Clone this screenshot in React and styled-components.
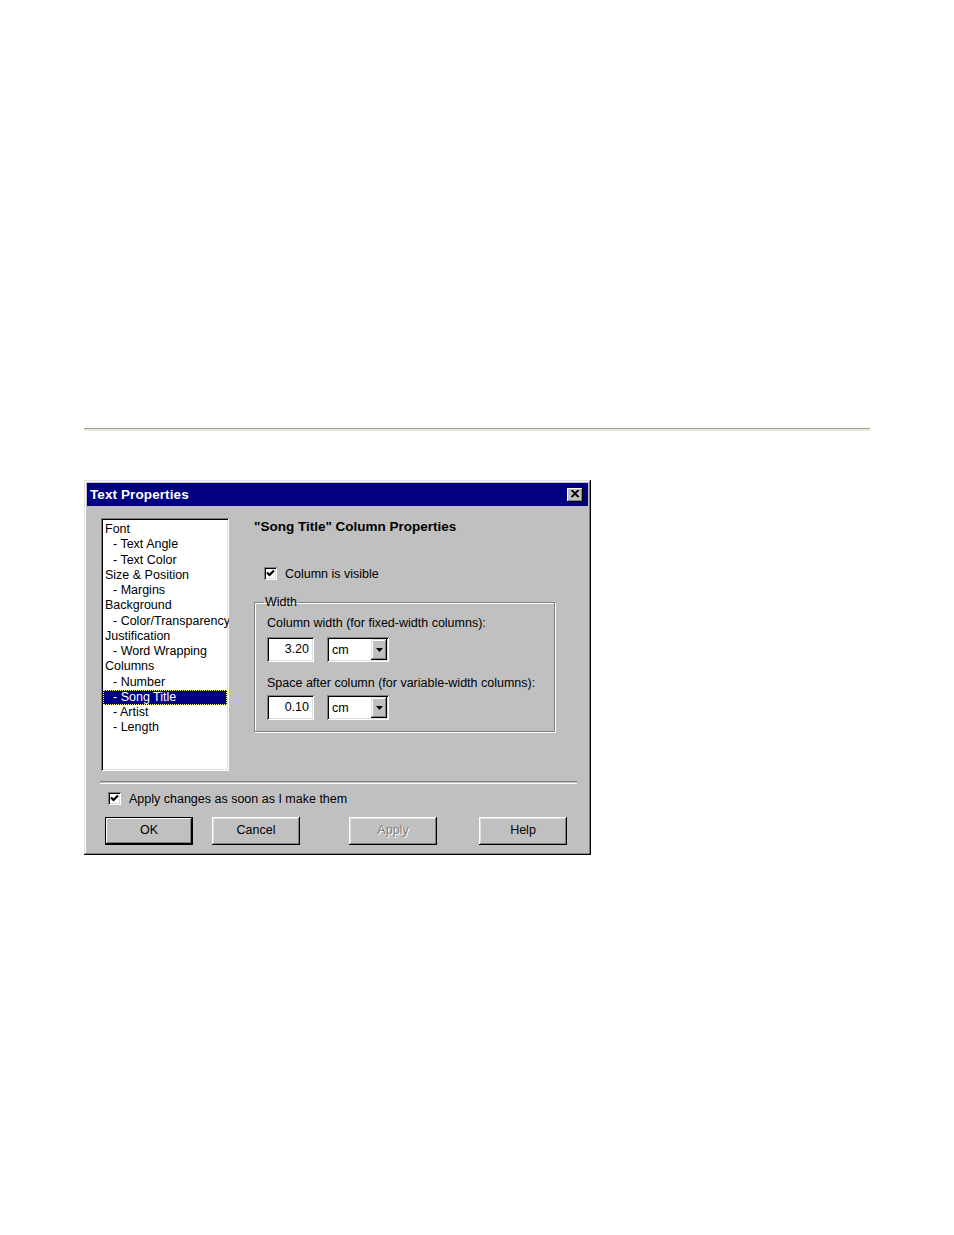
import React from "react";
import styled, { createGlobalStyle } from "styled-components";

const GlobalStyle = createGlobalStyle`
  html, body {
    margin: 0;
    padding: 0;
    background: #ffffff;
  }
  body {
    font-family: "Liberation Sans", Arial, sans-serif;
    font-size: 12.5px;
    color: #000;
  }
`;

const treeItems = [
  { label: "Font", level: 0 },
  { label: "Text Angle", level: 1 },
  { label: "Text Color", level: 1 },
  { label: "Size & Position", level: 0 },
  { label: "Margins", level: 1 },
  { label: "Background", level: 0 },
  { label: "Color/Transparency", level: 1 },
  { label: "Justification", level: 0 },
  { label: "Word Wrapping", level: 1 },
  { label: "Columns", level: 0 },
  { label: "Number", level: 1 },
  { label: "Song Title", level: 1, selected: true },
  { label: "Artist", level: 1 },
  { label: "Length", level: 1 },
];

export default function App() {
  return (
    <Page>
      <GlobalStyle />
      <Rule />

      <Window>
        <TitleBar>
          <TitleText>Text Properties</TitleText>
          <CloseButton aria-label="Close">
            <svg width="9" height="8" viewBox="0 0 9 8">
              <path d="M1 0 L8 7 M0 0 L7 7 M8 0 L1 7 M7 0 L0 7" stroke="#000" strokeWidth="1.2" />
            </svg>
          </CloseButton>
        </TitleBar>

        <Body>
          <TopSection>
            <ListBox>
              {treeItems.map((item) => (
                <ListItem key={item.label} $level={item.level} $selected={item.selected}>
                  {item.level > 0 ? "- " : ""}
                  {item.label}
                </ListItem>
              ))}
            </ListBox>

            <Panel>
              <Heading>"Song Title" Column Properties</Heading>

              <CheckRow $indent={10}>
                <CheckBox />
                <span>Column is visible</span>
              </CheckRow>

              <GroupBox>
                <Legend>Width</Legend>
                <FieldLabel $top={6}>Column width (for fixed-width columns):</FieldLabel>
                <FieldRow $top={6}>
                  <NumberField>3.20</NumberField>
                  <UnitSelect />
                </FieldRow>

                <FieldLabel $top={14}>
                  Space after column (for variable-width columns):
                </FieldLabel>
                <FieldRow $top={4}>
                  <NumberField>0.10</NumberField>
                  <UnitSelect />
                </FieldRow>
              </GroupBox>
            </Panel>
          </TopSection>

          <Separator />

          <CheckRow $indent={21} $top={7}>
            <CheckBox />
            <span>Apply changes as soon as I make them</span>
          </CheckRow>

          <ButtonRow>
            <Button $default>OK</Button>
            <Button $gap={19}>Cancel</Button>
            <Button $gap={49} disabled>
              Apply
            </Button>
            <Button $gap={42}>Help</Button>
          </ButtonRow>
        </Body>
      </Window>
    </Page>
  );
}

function CheckBox() {
  return (
    <CheckFrame>
      <svg width="9" height="9" viewBox="0 0 9 9">
        <path d="M1 3.5 L3.5 6 L8 1.5" fill="none" stroke="#000" strokeWidth="2.2" />
      </svg>
    </CheckFrame>
  );
}

function UnitSelect() {
  return (
    <SelectBox>
      <SelectValue>cm</SelectValue>
      <DropButton>
        <svg width="7" height="4" viewBox="0 0 7 4">
          <path d="M0 0 H7 L3.5 4 Z" fill="#000" />
        </svg>
      </DropButton>
    </SelectBox>
  );
}

const Page = styled.div`
  padding: 428px 0 380px 84px;
`;

const Rule = styled.div`
  width: 786px;
  height: 2px;
  border-top: 1px solid #a19f94;
  background: #ebe8d6;
  margin-bottom: 49px;
`;

const Window = styled.div`
  width: 507px;
  height: 375px;
  box-sizing: border-box;
  padding: 3px;
  background: #c0c0c0;
  box-shadow: inset -1px -1px #000, inset 1px 1px #dfdfdf,
    inset -2px -2px #808080, inset 2px 2px #fff;
  display: flex;
  flex-direction: column;
`;

const TitleBar = styled.div`
  height: 23px;
  background: #000080;
  display: flex;
  align-items: center;
  justify-content: space-between;
  padding: 0 5px 0 3px;
`;

const TitleText = styled.span`
  color: #fff;
  font-weight: bold;
  font-size: 13.5px;
  letter-spacing: 0.1px;
`;

const CloseButton = styled.div`
  width: 16px;
  height: 14px;
  box-sizing: border-box;
  background: #c0c0c0;
  box-shadow: inset -1px -1px #000, inset 1px 1px #fff, inset -2px -2px #808080;
  display: flex;
  align-items: center;
  justify-content: center;
  padding-bottom: 1px;
`;

const Body = styled.div`
  flex: 1;
  display: flex;
  flex-direction: column;
`;

const TopSection = styled.div`
  display: flex;
  padding: 12px 0 0 14px;
`;

const ListBox = styled.div`
  width: 128px;
  height: 253px;
  box-sizing: border-box;
  padding: 4px 2px 2px 2px;
  background: #fff;
  overflow: hidden;
  box-shadow: inset 1px 1px #808080, inset -1px -1px #fff,
    inset 2px 2px #000, inset -2px -2px #dfdfdf;
`;

const ListItem = styled.div`
  height: 15.25px;
  line-height: 15px;
  white-space: nowrap;
  padding-left: ${(p) => (p.$level ? 10 : 2)}px;
  box-sizing: border-box;
  color: ${(p) => (p.$selected ? "#fff" : "#000")};
  background: ${(p) => (p.$selected ? "#000080" : "transparent")};
  outline: ${(p) => (p.$selected ? "1px dotted #ffff9a" : "none")};
  outline-offset: -1px;
`;

const Panel = styled.div`
  margin-left: 25px;
  width: 301px;
  display: flex;
  flex-direction: column;
`;

const Heading = styled.div`
  font-weight: bold;
  font-size: 13.5px;
  line-height: 16px;
  margin-top: 1px;
`;

const CheckRow = styled.label`
  display: flex;
  align-items: center;
  gap: 8px;
  height: 15px;
  margin-left: ${(p) => p.$indent || 0}px;
  margin-top: ${(p) => (p.$top === undefined ? 31 : p.$top)}px;
`;

const CheckFrame = styled.span`
  width: 13px;
  height: 13px;
  box-sizing: border-box;
  background: #fff;
  box-shadow: inset 1px 1px #808080, inset -1px -1px #fff,
    inset 2px 2px #000, inset -2px -2px #dfdfdf;
  display: flex;
  align-items: center;
  justify-content: center;
`;

const GroupBox = styled.fieldset`
  margin: 14px 0 0 0;
  padding: 0 12px 10px 12px;
  min-width: 0;
  height: 137px;
  box-sizing: border-box;
  border: 1px solid #808080;
  box-shadow: 1px 1px #fff, inset 1px 1px #fff;
`;

const Legend = styled.legend`
  padding: 0 1px;
  margin-left: -3px;
  line-height: 15px;
`;

const FieldLabel = styled.div`
  line-height: 15px;
  margin-top: ${(p) => p.$top || 0}px;
  white-space: nowrap;
`;

const FieldRow = styled.div`
  display: flex;
  gap: 13px;
  margin-top: ${(p) => p.$top}px;
`;

const NumberField = styled.div`
  width: 47px;
  height: 25px;
  box-sizing: border-box;
  background: #fff;
  box-shadow: inset 1px 1px #808080, inset -1px -1px #fff,
    inset 2px 2px #000, inset -2px -2px #dfdfdf;
  display: flex;
  align-items: center;
  justify-content: flex-end;
  padding: 0 5px 2px 0;
`;

const SelectBox = styled.div`
  width: 62px;
  height: 25px;
  box-sizing: border-box;
  padding: 2px;
  background: #fff;
  box-shadow: inset 1px 1px #808080, inset -1px -1px #fff,
    inset 2px 2px #000, inset -2px -2px #dfdfdf;
  display: flex;
  align-items: stretch;
`;

const SelectValue = styled.div`
  flex: 1;
  display: flex;
  align-items: center;
  padding-left: 3px;
  padding-top: 1px;
`;

const DropButton = styled.div`
  width: 16px;
  background: #c0c0c0;
  box-shadow: inset -1px -1px #000, inset 1px 1px #dfdfdf,
    inset -2px -2px #808080, inset 2px 2px #fff;
  display: flex;
  align-items: center;
  justify-content: center;
`;

const Separator = styled.div`
  margin: 10px 0 0 13px;
  width: 477px;
  height: 1px;
  border-top: 1px solid #808080;
  border-bottom: 1px solid #fff;
`;

const ButtonRow = styled.div`
  display: flex;
  padding-left: 18px;
  margin-top: 11px;
`;

const Button = styled.button`
  width: 88px;
  height: 28px;
  margin: 0 0 0 ${(p) => p.$gap || 0}px;
  padding: 0 0 2px 0;
  border: none;
  background: #c0c0c0;
  font-family: "Liberation Sans", Arial, sans-serif;
  font-size: 12.5px;
  color: #000;
  box-shadow: ${(p) =>
    p.$default
      ? "inset -1px -1px #000, inset 1px 1px #000, inset -2px -2px #000, inset 2px 2px #fff, inset -3px -3px #808080"
      : "inset -1px -1px #000, inset 1px 1px #fff, inset -2px -2px #808080, inset 2px 2px #dfdfdf"};

  &:disabled {
    color: #808080;
    text-shadow: 1px 1px #fff;
  }
`;
